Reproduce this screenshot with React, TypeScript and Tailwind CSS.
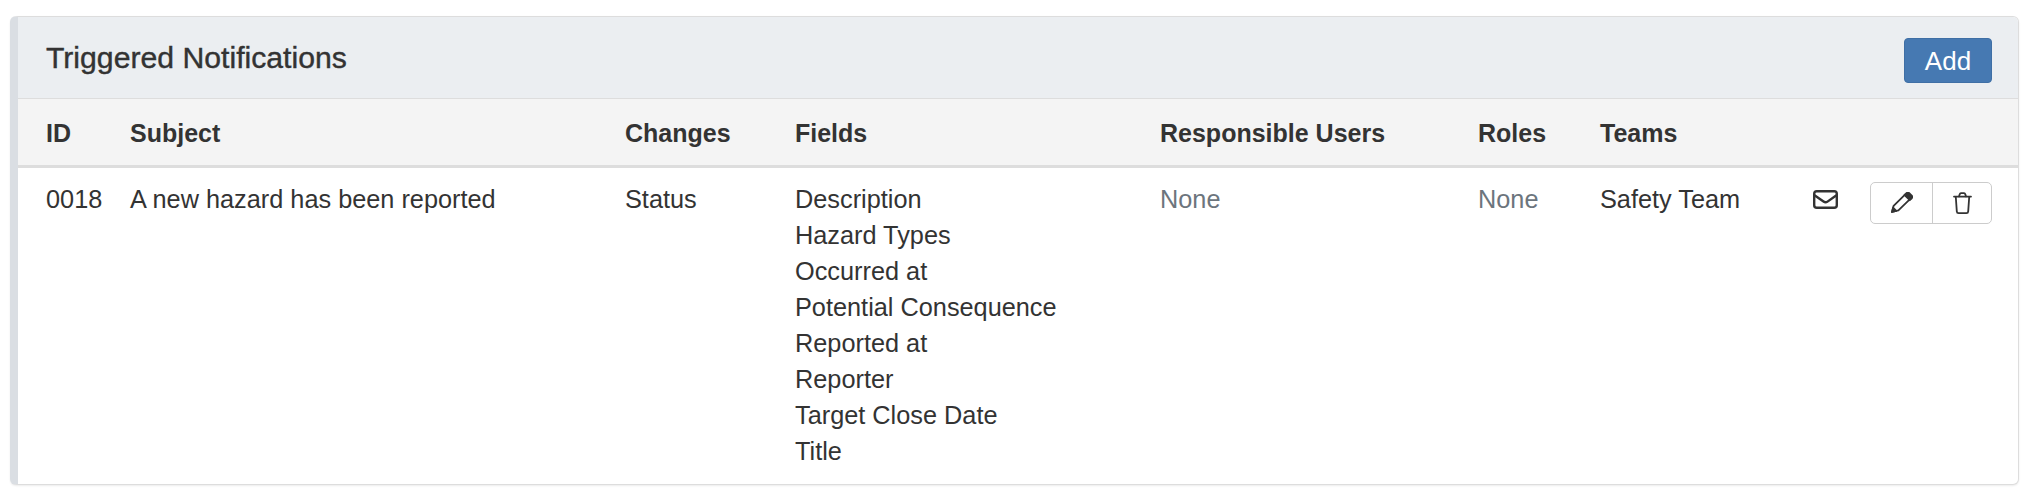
import React from 'react';

const FIELDS = [
  'Description',
  'Hazard Types',
  'Occurred at',
  'Potential Consequence',
  'Reported at',
  'Reporter',
  'Target Close Date',
  'Title',
];

const COLUMNS = [
  { label: 'ID', width: 'w-[112px]' },
  { label: 'Subject', width: 'w-[495px]' },
  { label: 'Changes', width: 'w-[170px]' },
  { label: 'Fields', width: 'w-[365px]' },
  { label: 'Responsible Users', width: 'w-[318px]' },
  { label: 'Roles', width: 'w-[122px]' },
  { label: 'Teams', width: 'w-[213px]' },
];

const EnvelopeIcon = () => (
  <svg viewBox="0 0 25 19" className="w-[25px] h-[19px]" fill="none" stroke="#333" strokeWidth="2.4">
    <rect x="1.2" y="1.2" width="22.6" height="16.6" rx="2.6" />
    <path d="M1.5 5.2l9 6.4a3.4 3.4 0 0 0 4 0l9-6.4" />
  </svg>
);

const PencilIcon = () => (
  <svg viewBox="0 0 22 21" className="w-[22px] h-[21px]" fill="none" stroke="#333" strokeWidth="1.8" strokeLinejoin="round">
    <path d="M1 20l1.6-6.2L14 2.6l5 4.6L7.4 18.4z" />
    <path d="M13.6 3l1.6-1.6a2.4 2.4 0 0 1 3.3 0l2 1.9a2.4 2.4 0 0 1 0 3.3L18.8 8.2z" fill="#333" />
    <path d="M1 20l1.1-4.3 3.2 3.1z" fill="#333" />
  </svg>
);

const TrashIcon = () => (
  <svg viewBox="0 0 19 22" className="w-[19px] h-[22px]" fill="none" stroke="#333" strokeWidth="1.8" strokeLinecap="round" strokeLinejoin="round">
    <path d="M1 4.6h17" />
    <path d="M6 4.4l.7-2.2a1.4 1.4 0 0 1 1.3-1h3a1.4 1.4 0 0 1 1.3 1l.7 2.2" />
    <path d="M2.8 5l1 14.4a1.8 1.8 0 0 0 1.8 1.7h7.8a1.8 1.8 0 0 0 1.8-1.7l1-14.4" />
  </svg>
);

export default function App() {
  return (
    <div className="bg-white h-[502px] pt-4 pl-[10px] pr-[19px] font-['Liberation_Sans',Arial,sans-serif] text-[#333] text-[25.3px] leading-9">
      <section className="h-[469px] bg-white border border-[#ddd] border-l-8 border-l-[#dadee3] rounded-[6px] shadow-[0_1px_2px_rgba(0,0,0,0.08)] overflow-hidden">
        <header className="h-[82px] bg-[#ebeef1] border-b border-[#ddd] flex items-center justify-between pl-[28px] pr-[26px]">
          <h2 className="text-[30.2px] leading-8 text-[#333] [-webkit-text-stroke:0.4px_#333]">Triggered Notifications</h2>
          <button className="self-start mt-[21px] w-[88px] h-[45px] bg-[#4679b2] border border-[#3f6fa5] rounded-[4px] text-white text-[26px] leading-none">Add</button>
        </header>
        <table className="w-full table-fixed border-collapse">
          <thead>
            <tr className="h-[67px] bg-[#f4f4f4] border-b-[3px] border-[#ddd]">
              {COLUMNS.map((col, i) => (
                <th key={col.label} className={`${col.width} text-left font-bold text-[25px] pt-[2px] ${i === 0 ? 'pl-[28px]' : ''}`}>{col.label}</th>
              ))}
              <th />
            </tr>
          </thead>
          <tbody>
            <tr className="align-top">
              <td className="pl-[28px] pt-[13px]">0018</td>
              <td className="pt-[13px]">A new hazard has been reported</td>
              <td className="pt-[13px]">Status</td>
              <td className="pt-[13px]">
                {FIELDS.map((f) => (
                  <div key={f}>{f}</div>
                ))}
              </td>
              <td className="pt-[13px] text-[#6c757d]">None</td>
              <td className="pt-[13px] text-[#6c757d]">None</td>
              <td className="pt-[13px] whitespace-nowrap">Safety Team</td>
              <td className="pt-[14px] pr-[26px]">
                <div className="flex items-start justify-end">
                  <span className="mr-[32px] mt-[8px]"><EnvelopeIcon /></span>
                  <div className="flex h-[42px] w-[122px] border border-[#ccc] rounded-[5px]">
                    <span className="w-[62px] flex items-center justify-center border-r border-[#ccc]"><PencilIcon /></span>
                    <span className="flex-1 flex items-center justify-center"><TrashIcon /></span>
                  </div>
                </div>
              </td>
            </tr>
          </tbody>
        </table>
      </section>
    </div>
  );
}
